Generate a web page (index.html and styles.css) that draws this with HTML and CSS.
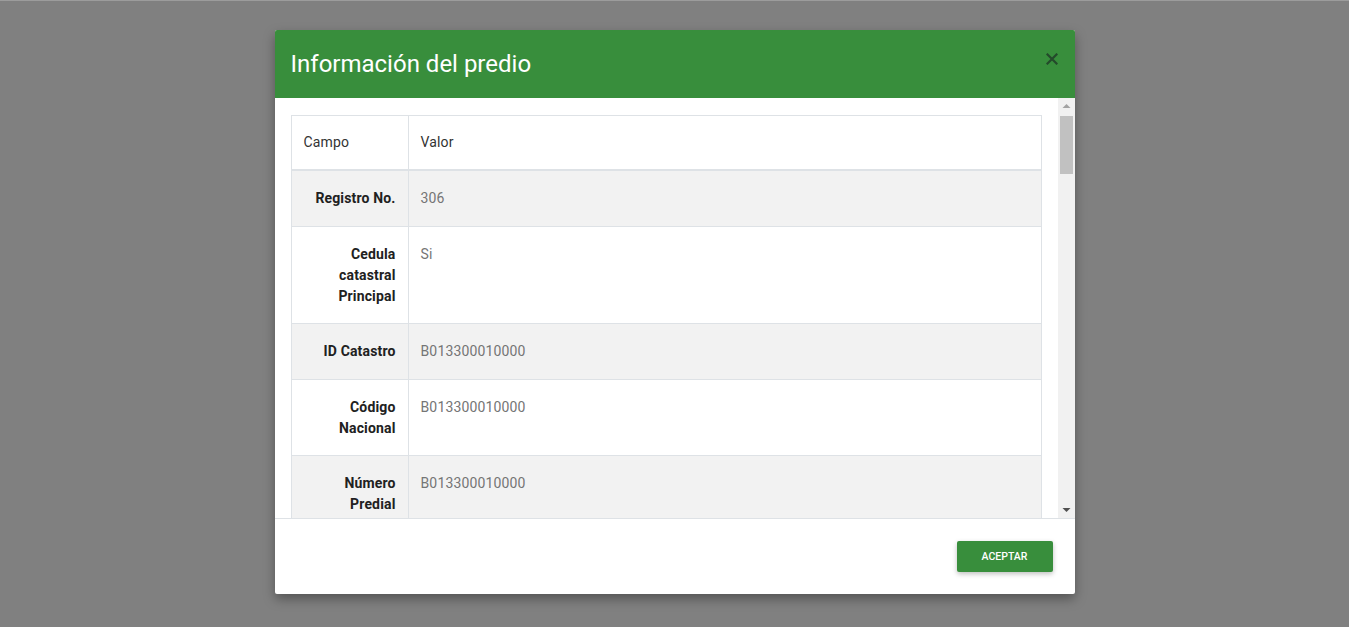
FILE: index.html
```html
<!DOCTYPE html>
<html lang="es">
<head>
<meta charset="utf-8">
<title>Información del predio</title>
<link rel="stylesheet" href="styles.css">
</head>
<body>
<div class="backdrop">
  <div class="modal">
    <div class="modal-header">
      <h2 class="modal-title">Información del predio</h2>
      <button class="close" aria-label="Cerrar">
        <svg width="12" height="12" viewBox="0 0 12 12"><path d="M1.5 1.5 L10.5 10.5 M10.5 1.5 L1.5 10.5" stroke="#22432a" stroke-width="2.2" stroke-linecap="square"/></svg>
      </button>
    </div>
    <div class="modal-body">
      <div class="scroll-view">
        <table class="info">
          <thead>
            <tr><th class="col-field">Campo</th><th>Valor</th></tr>
          </thead>
          <tbody>
            <tr><th class="col-field">Registro No.</th><td>306</td></tr>
            <tr><th class="col-field">Cedula catastral Principal</th><td>Si</td></tr>
            <tr><th class="col-field">ID Catastro</th><td>B013300010000</td></tr>
            <tr><th class="col-field">Código Nacional</th><td>B013300010000</td></tr>
            <tr><th class="col-field">Número Predial</th><td>B013300010000</td></tr>
            <tr><th class="col-field">Matrícula Inmobiliaria</th><td>50N-1234567</td></tr>
            <tr><th class="col-field">Dirección</th><td>CL 10 20 30</td></tr>
          </tbody>
        </table>
      </div>
      <div class="scrollbar" aria-hidden="true">
        <div class="sb-btn">
          <svg width="17" height="17" viewBox="0 0 17 17"><path d="M4.5 10 L8.5 6 L12.5 10 Z" fill="#a3a3a3"/></svg>
        </div>
        <div class="sb-track">
          <div class="sb-thumb"></div>
        </div>
        <div class="sb-btn">
          <svg width="17" height="17" viewBox="0 0 17 17"><path d="M4.5 7 L8.5 11 L12.5 7 Z" fill="#505050"/></svg>
        </div>
      </div>
    </div>
    <div class="modal-footer">
      <button class="btn">ACEPTAR</button>
    </div>
  </div>
</div>
</body>
</html>
```

FILE: styles.css
```css
html, body {
  margin: 0;
  padding: 0;
  height: 100%;
}
body {
  background: #808080;
  font-family: Roboto, "Liberation Sans", Arial, sans-serif;
  border-top: 1px solid #9c9c9c;
  box-sizing: border-box;
  overflow: hidden;
}
.backdrop {
  display: flex;
  justify-content: center;
  padding-top: 29px;
}
.modal {
  width: 800px;
  background: #fff;
  border-radius: 2px;
  box-shadow: 0 5px 12px rgba(0,0,0,0.35);
  display: flex;
  flex-direction: column;
  overflow: hidden;
}
.modal-header {
  background: #388e3c;
  height: 68px;
  box-sizing: border-box;
  padding: 0 16px;
  display: flex;
  align-items: center;
  justify-content: space-between;
}
.modal-title {
  margin: 0;
  font-size: 24px;
  font-weight: 400;
  color: #fff;
}
.close {
  border: 0;
  background: none;
  padding: 0;
  width: 12px;
  height: 12px;
  margin-top: -11px;
  margin-right: 1px;
  display: flex;
  opacity: 0.9;
  cursor: pointer;
}
.modal-body {
  height: 421px;
  box-sizing: border-box;
  border-bottom: 1px solid #dee2e6;
  display: flex;
}
.scroll-view {
  flex: 1;
  overflow: hidden;
  padding: 17px 16px 0 16px;
}
.scrollbar {
  width: 17px;
  background: #f1f1f1;
  display: flex;
  flex-direction: column;
}
.sb-btn {
  height: 17px;
  display: flex;
}
.sb-track {
  flex: 1;
  padding: 1px 2px 0 2px;
}
.sb-thumb {
  height: 58px;
  background: #c1c1c1;
}
.info {
  width: 100%;
  border-collapse: collapse;
  font-size: 14px;
  letter-spacing: 0.15px;
}
.info th, .info td {
  border: 1px solid #dee2e6;
  padding: 16px 12px;
  vertical-align: top;
  text-align: left;
}
.info th {
  line-height: 21px;
}
.info tbody th {
  padding-top: 17px;
  padding-bottom: 16px;
}
.info td {
  line-height: 23px;
}
.info thead th {
  font-weight: 400;
  color: #333;
  border-bottom: 2px solid #dee2e6;
  padding-top: 16px;
  padding-bottom: 16px;
  line-height: 21px;
}
.info .col-field {
  width: 92px;
}
.info tbody th {
  text-align: right;
  font-weight: 700;
  color: #212121;
}
.info tbody td {
  color: #757575;
}
.info tbody tr:nth-child(odd) {
  background: #f2f2f2;
}
.modal-footer {
  height: 75px;
  display: flex;
  align-items: center;
  justify-content: flex-end;
  padding: 0 22px;
}
.btn {
  width: 96px;
  height: 31px;
  border: 0;
  border-radius: 2px;
  background: #388e3c;
  color: #fff;
  font-family: Roboto, "Liberation Sans", Arial, sans-serif;
  font-size: 10.5px;
  font-weight: 500;
  box-shadow: 0 2px 5px rgba(0,0,0,0.25);
  margin-top: 0;
  cursor: pointer;
}
```
